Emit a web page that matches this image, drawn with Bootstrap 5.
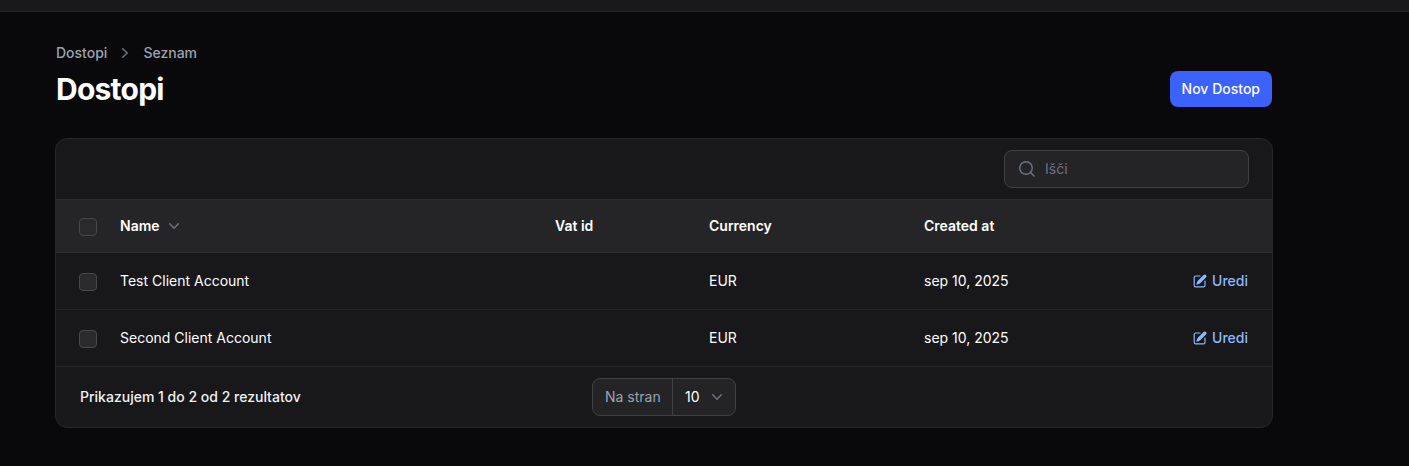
<!DOCTYPE html>
<html lang="en">
<head>
    <meta charset="UTF-8">
    <meta name="viewport" content="width=device-width, initial-scale=1.0">
    <title>Dostopi</title>
    <link href="https://cdn.jsdelivr.net/npm/bootstrap@5.3.2/dist/css/bootstrap.min.css" rel="stylesheet">
    <style>
        body {
            background: #09090b;
            font-family: Inter, "Liberation Sans", sans-serif;
            font-size: 14px;
            color: #fff;
        }
        .top-strip {
            height: 12px;
            background: #18181b;
            border-bottom: 1px solid #27272a;
        }
        .page-wrap {
            padding: 31px 137px 0 56px;
        }
        .crumbs {
            color: #9ca3af;
            font-weight: 500;
            line-height: 20px;
            gap: 8px;
            height: 20px;
            margin-bottom: 8px;
        }
        .page-title {
            font-size: 30px;
            font-weight: 700;
            line-height: 36px;
            letter-spacing: -0.75px;
            margin: 0 0 1px;
        }
        .btn-new {
            background: #3b62fb;
            color: #fff;
            font-size: 14px;
            font-weight: 500;
            line-height: 20px;
            padding: 8px 12px;
            border: 0;
            border-radius: 8px;
            margin-bottom: 1px;
        }
        .panel-box {
            margin: 30px 0 0 -1px;
            width: 1218px;
            background: #18181b;
            border: 1px solid #27272a;
            border-radius: 12px;
            overflow: hidden;
        }
        .panel-tools {
            height: 61px;
            padding: 11px 23px 0 0;
            border-bottom: 1px solid #2e2e31;
        }
        .search-box {
            width: 245px;
            height: 38px;
            background: #242427;
            border: 1px solid #414144;
            border-radius: 8px;
            padding: 0 12px;
            gap: 8px;
            color: #6b7280;
            line-height: 20px;
        }
        .grid-table {
            width: 100%;
            table-layout: fixed;
            border-collapse: collapse;
        }
        .grid-table th, .grid-table td {
            padding: 0;
            vertical-align: middle;
            line-height: 20px;
        }
        .grid-table th {
            background: #252527;
            height: 52px;
            font-weight: 600;
            border-bottom: 1px solid #2e2e31;
        }
        .grid-table td {
            height: 57px;
            font-weight: 400;
            border-bottom: 1px solid #27272a;
        }
        .col-check { width: 64px; }
        .col-name { width: 435px; }
        .col-vat { width: 154px; }
        .col-cur { width: 215px; }
        .tick-box {
            display: block;
            width: 18px;
            height: 18px;
            margin: 2px 0 0 23px;
            background: #2a2a2d;
            border: 1px solid #47474a;
            border-radius: 4px;
        }
        .sort-head {
            gap: 4px;
        }
        .edit-link {
            color: #8bb8fb;
            font-weight: 500;
            text-decoration: none;
            gap: 4px;
            padding-right: 24px;
            vertical-align: middle;
        }
        .edit-link svg {
            fill: #8bb8fb;
        }
        .panel-foot {
            display: grid;
            grid-template-columns: 1fr auto 1fr;
            align-items: center;
            height: 60px;
            padding: 0 24px;
        }
        .foot-count {
            font-weight: 500;
            color: #f1f1f3;
        }
        .per-page {
            height: 38px;
            width: 144px;
            background: #242427;
            border: 1px solid #414144;
            border-radius: 8px;
        }
        .per-label {
            width: 80px;
            padding-left: 12px;
            color: #9ca3af;
            border-right: 1px solid #414144;
            height: 100%;
            line-height: 36px;
        }
        .per-value {
            flex: 1;
            padding: 0 8px 0 12px;
        }
    </style>
</head>
<body>
    <div class="top-strip"></div>
    <div class="page-wrap">
        <div class="d-flex justify-content-between align-items-end">
            <div>
                <div class="crumbs d-flex align-items-center">
                    <span>Dostopi</span>
                    <svg width="20" height="20" viewBox="0 0 20 20" fill="#6b7280"><path d="M7.21 14.77a.75.75 0 01.02-1.06L11.168 10 7.23 6.29a.75.75 0 111.04-1.08l4.5 4.25a.75.75 0 010 1.08l-4.5 4.25a.75.75 0 01-1.06-.02z"/></svg>
                    <span>Seznam</span>
                </div>
                <h1 class="page-title">Dostopi</h1>
            </div>
            <button class="btn-new" type="button">Nov Dostop</button>
        </div>

        <div class="panel-box">
            <div class="panel-tools d-flex justify-content-end">
                <div class="search-box d-flex align-items-center">
                    <svg width="20" height="20" viewBox="0 0 20 20" fill="none" stroke="#6b7280" stroke-width="1.500"><circle cx="9" cy="9" r="6.250"/><path d="m13.500 13.500 4 4"/></svg>
                    <span>Išči</span>
                </div>
            </div>
            <table class="grid-table">
                <thead>
                    <tr>
                        <th class="col-check"><span class="tick-box"></span></th>
                        <th class="col-name">
                            <span class="sort-head d-inline-flex align-items-center">Name
                                <svg width="20" height="20" viewBox="0 0 20 20" fill="#6b7280"><path d="M5.230 7.210a.75.75 0 011.060.020L10 11.168l3.710-3.938a.75.75 0 111.080 1.040l-4.250 4.500a.75.75 0 01-1.080 0l-4.250-4.500a.75.75 0 01.020-1.060z"/></svg>
                            </span>
                        </th>
                        <th class="col-vat">Vat id</th>
                        <th class="col-cur">Currency</th>
                        <th>Created at</th>
                        <th></th>
                    </tr>
                </thead>
                <tbody id="rows"></tbody>
            </table>
            <div class="panel-foot">
                <div class="foot-count">Prikazujem 1 do 2 od 2 rezultatov</div>
                <div class="per-page d-flex align-items-center">
                    <div class="per-label">Na stran</div>
                    <div class="per-value d-flex align-items-center justify-content-between">
                        <span>10</span>
                        <svg width="20" height="20" viewBox="0 0 20 20" fill="#6b7280"><path d="M5.230 7.210a.75.75 0 011.060.020L10 11.168l3.710-3.938a.75.75 0 111.080 1.040l-4.250 4.500a.75.75 0 01-1.080 0l-4.250-4.500a.75.75 0 01.020-1.060z"/></svg>
                    </div>
                </div>
                <div></div>
            </div>
        </div>
    </div>
    <script>
        const accounts = [
            { name: 'Test Client Account', currency: 'EUR', created: 'sep 10, 2025' },
            { name: 'Second Client Account', currency: 'EUR', created: 'sep 10, 2025' },
        ];
        const rows = document.getElementById('rows');
        accounts.forEach(acc => {
            const row = document.createElement('tr');
            row.innerHTML = `<td><span class="tick-box"></span></td>
                <td>${acc.name}</td>
                <td></td>
                <td>${acc.currency}</td>
                <td>${acc.created}</td>
                <td class="text-end"><a href="#" class="edit-link d-inline-flex align-items-center">
                    <svg width="16" height="16" viewBox="0 0 20 20"><path d="M5.433 13.917l1.262-3.155A4 4 0 017.580 9.420l6.920-6.918a2.121 2.121 0 013 3l-6.920 6.918c-.383.383-.840.685-1.343.886l-3.154 1.262a.5.5 0 01-.650-.650z"/><path d="M3.500 5.750c0-.690.560-1.250 1.250-1.250H10A.75.75 0 0010 3H4.750A2.750 2.750 0 002 5.750v9.500A2.750 2.750 0 004.750 18h9.500A2.750 2.750 0 0017 15.250V10a.75.75 0 00-1.500 0v5.250c0 .690-.560 1.250-1.250 1.250h-9.500c-.690 0-1.250-.560-1.250-1.250v-9.500z"/></svg>
                    Uredi</a></td>`;
            rows.appendChild(row);
        });
    </script>
</body>
</html>
